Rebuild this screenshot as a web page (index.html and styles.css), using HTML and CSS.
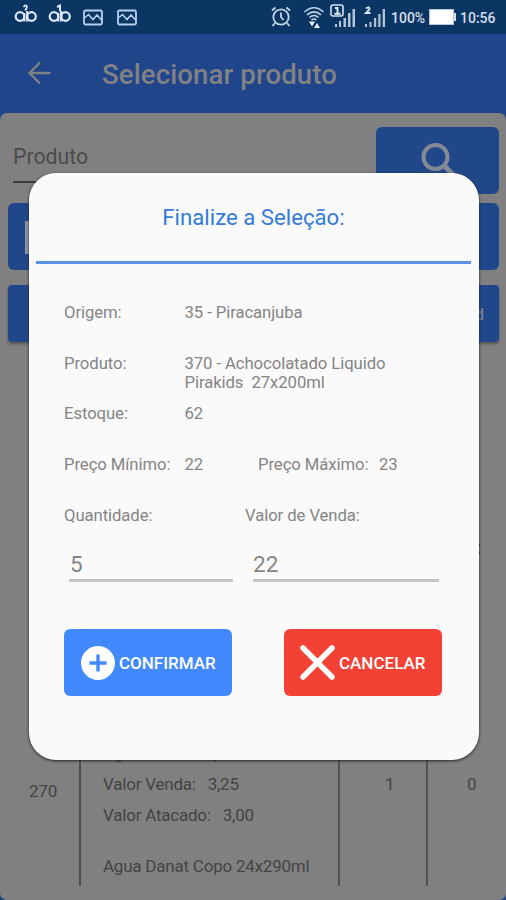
FILE: index.html
```html
<!DOCTYPE html>
<html lang="pt-BR">
<head>
<meta charset="utf-8">
<title>Selecionar produto</title>
<link rel="stylesheet" href="styles.css">
</head>
<body>
<div class="screen">
  <header class="status">
    <div class="status-left">
      <svg width="24" height="20" viewBox="0 0 24 20" fill="none" stroke="#dce9fa" stroke-width="2.200"><circle cx="6" cy="12.500" r="4.300"/><circle cx="17.500" cy="12.500" r="4.300"/><path d="M10.300 9v8.500M13.200 7v10.500"/><path d="M9.500 3q2.500-3 3.500-.500 0 1.500-2 4" stroke-width="1.800"/></svg>
      <svg width="24" height="20" viewBox="0 0 24 20" fill="none" stroke="#dce9fa" stroke-width="2.200"><circle cx="6" cy="12.500" r="4.300"/><circle cx="17.500" cy="12.500" r="4.300"/><path d="M10.300 9v8.500M13.200 7v10.500"/><path d="M9 3l3-1.500v6" stroke-width="2"/></svg>
      <svg class="pic" width="20" height="17" viewBox="0 0 20 17" fill="none" stroke="#b5cff0" stroke-width="1.800"><rect x="1" y="1.500" width="18" height="14" rx="1.500"/><path d="M2 8.500l3.500-3 4.500 5 4-4.500 4.500 5" stroke-width="1.600"/></svg>
      <svg class="pic" width="20" height="17" viewBox="0 0 20 17" fill="none" stroke="#b5cff0" stroke-width="1.800"><rect x="1" y="1.500" width="18" height="14" rx="1.500"/><path d="M2 8.500l3.500-3 4.500 5 4-4.500 4.500 5" stroke-width="1.600"/></svg>
    </div>
    <div class="status-right">
      <svg width="20" height="22" viewBox="0 0 20 22" fill="none" stroke="#c3d3e6" stroke-width="1.800"><circle cx="10" cy="11" r="7.700"/><path d="M10 6.500V11l2.500 3M1 4.500l3.500-3M19 4.500l-3.500-3M4 17l-2.500 3M16 17l2.500 3"/></svg>
      <svg class="wifi" width="22" height="24" viewBox="0 0 22 24" fill="none" stroke="#c3d3e6" stroke-width="1.600"><path d="M1.500 6q9.500-8.500 19 0M4 8.800q7-5.800 14 0M6.500 11.500q4.500-4 9 0M8.500 14q2.500-2 5 0"/><path d="M6 15.500h6l-3 5zM11 22h6l-3-5z" fill="#e8f0fa" stroke="none"/></svg>
      <svg class="sim" width="26" height="24" viewBox="0 0 26 24"><path d="M5 20h2v3H5zM9 17h2v6H9zM13.500 14h2.500v9h-2.500zM18 9h2.500v14H18zM22.500 5H25v18h-2.500z" fill="#b4c4d8"/><rect x="1" y="1" width="12" height="11" rx="2" fill="#0b3664" stroke="#d4e0ef" stroke-width="1.600"/><path d="M5 4h2.500v6M4.500 9.700h6" fill="none" stroke="#e4edf8" stroke-width="1.900"/></svg>
      <svg class="sim2" width="22" height="22" viewBox="0 0 22 22"><path d="M1 18h2v3H1zM5.500 16h2v5h-2zM10 12h2.200v9H10zM14.300 8h2.200v13h-2.200zM18.700 3H21v18h-2.300z" fill="#b4c4d8"/><path d="M2 2.500q3.500-2.500 3.500.8L2 7h4.500" fill="none" stroke="#dce7f4" stroke-width="1.800"/></svg>
      <span class="pct">100%</span>
      <span class="battery"></span>
      <span class="clock">10:56</span>
    </div>
  </header>
  <div class="appbar">
    <svg class="back" width="24" height="24" viewBox="0 0 24 24" fill="none" stroke="#808185" stroke-width="2.300"><path d="M23.500 12H3M13 1.500L2.500 12 13 22.500"/></svg>
    <h1>Selecionar produto</h1>
  </div>
  <main class="page">
    <div class="search">
      <div class="field">Produto</div>
      <div class="btn search-btn"><svg width="40" height="40" viewBox="0 0 40 40" fill="none" stroke="#848a95" stroke-width="4"><circle cx="16.500" cy="18" r="12"/><path d="M25 26.500l12 12" stroke-width="5"/></svg></div>
    </div>
    <div class="btn scan"><span class="scan-icon"></span></div>
    <div class="btn tabs">d</div>
    <div class="list">
      <div class="line-mark">:</div>
      <div class="item">
        <div class="code">270</div>
        <div class="desc">
          <p class="prev">Agua Danat Copo</p>
          <p class="d1">Valor Venda:&nbsp;&nbsp; 3,25</p>
          <p class="d2">Valor Atacado:&nbsp;&nbsp; 3,00</p>
          <p class="d3">Agua Danat Copo 24x290ml</p>
        </div>
        <div class="num">1</div>
        <div class="num last">0</div>
      </div>
    </div>
  </main>
  <section class="dialog">
    <h2><span>Finalize a Seleção:</span></h2>
    <div class="info">
      <div class="row"><span class="label">Origem:</span><span>35 - Piracanjuba</span></div>
      <div class="row"><span class="label">Produto:</span><span>370 - Achocolatado Liquido<br>Pirakids&nbsp; 27x200ml</span></div>
      <div class="row"><span class="label">Estoque:</span><span>62</span></div>
      <div class="row"><span class="label">Preço Mínimo:</span><span class="min">22</span><span class="max">Preço Máximo:</span><span>23</span></div>
      <div class="row"><span class="qty">Quantidade:</span><span>Valor de Venda:</span></div>
    </div>
    <div class="inputs"><div class="input first">5</div><div class="input">22</div></div>
    <div class="actions">
      <div class="action confirm"><svg width="34" height="34" viewBox="0 0 34 34"><circle cx="17" cy="17" r="17" fill="#fff"/><path d="M17 8.500v17M8.500 17h17" stroke="#4289fd" stroke-width="3.400"/></svg><span>CONFIRMAR</span></div>
      <div class="action cancel"><svg width="35" height="35" viewBox="0 0 35 35"><path d="M3 3l29 29M32 3L3 32" stroke="#fff" stroke-width="5.500" stroke-linecap="round"/></svg><span>CANCELAR</span></div>
    </div>
  </section>
</div>
</body>
</html>
```
FILE: styles.css
```css
* { box-sizing: border-box; }
body { margin: 0; font-family: Roboto, "Liberation Sans", sans-serif; }
h1, h2, p { margin: 0; }
svg { display: block; flex: none; }
.screen { position: relative; width: 506px; height: 900px; overflow: hidden; background: #21458a; display: flex; flex-direction: column; }
.status { height: 34px; flex: none; background: #0b3664; display: flex; justify-content: space-between; padding: 0 10px 0 14px; color: #d5deea; }
.status-left { display: flex; gap: 10px; padding-top: 4px; }
.status-left .pic { margin: 5px 4px 0 1px; }
.status-left .pic:last-child { margin-left: 0; }
.status-right { display: flex; align-items: flex-start; padding-top: 6px; font-size: 14px; line-height: 24px; font-weight: 500; }
.wifi { margin-left: 12px; }
.sim { margin: -2px 0 0 7px; }
.sim2 { margin: 0 0 0 8px; }
.status-right > svg:first-child { margin-right: -3px; }
.status-right .sim { margin-left: 5px; }
.status-right .wifi { margin-left: 15px; }
.pct { margin-left: 5px; width: 35px; white-space: nowrap; }
.battery { width: 25px; height: 16px; margin: 3px 0 0 3px; background: #fff; border: 1px solid #b9c6d6; position: relative; }
.battery::after { content: ""; position: absolute; right: -3px; top: 3px; width: 2px; height: 8px; background: #d5deea; }
.clock { margin-left: 6px; width: 36px; white-space: nowrap; }
.appbar { height: 79px; flex: none; display: flex; align-items: center; padding-left: 27px; }
.back { margin: -2px 51px 0 0; }
h1 { font-size: 27.600px; font-weight: 500; letter-spacing: 0.1px; color: #808185; line-height: 34px; padding-top: 3px; }
.page { flex: 1; background: #808080; border-radius: 7px; padding: 14px 7px 14px 8px; display: flex; flex-direction: column; overflow: hidden; }
.btn { background: #21478b; border-radius: 6px; flex: none; }
.search { display: flex; justify-content: space-between; height: 67px; flex: none; }
.field { width: 355px; height: 56px; margin-left: 5px; border-bottom: 2px solid #3c3c3c; font-size: 21.300px; color: #4b4b4b; line-height: 60px; }
.search-btn { width: 123px; padding: 12px 0 0 43px; }
.scan { height: 67px; margin-top: 9px; padding: 18px 17px; }
.scan-icon { display: block; width: 70px; height: 33px; background: #9096a1; }
.tabs { height: 57px; margin-top: 15px; border-radius: 4px; text-align: right; padding-right: 15px; line-height: 58px; font-size: 17px; color: #838995; box-shadow: 0 2px 3px #555; }
.list { flex: 1; display: flex; flex-direction: column; justify-content: space-between; }
.line-mark { text-align: right; padding: 194px 18px 0 0; font-size: 18px; line-height: 24px; font-weight: 700; color: #161616; }
.item { display: flex; height: 158px; color: #444; font-size: 17px; white-space: nowrap; }
.item > div { flex: none; }
.item > div + div { border-left: 2px solid #505050; }
.code { width: 71px; padding: 51px 0 0 21px; line-height: 24px; letter-spacing: -0.2px; }
.desc { width: 259px; padding-left: 22px; line-height: 24px; letter-spacing: -0.22px; }
.prev { padding-top: 13px; }
.d1, .d2 { padding-top: 7px; }
.d3 { padding-top: 27px; }
.num { width: 88px; padding: 44px 0 0 45px; line-height: 24px; }
.item .last { padding-left: 39px; width: 65px; }
.dialog { position: absolute; left: 29px; top: 173px; width: 450px; height: 587px; background: #fafafa; border-radius: 27px; box-shadow: 0 1px 3px #222; color: #858585; }
h2 { height: 91px; margin: 0 8px 0 7px; border-bottom: 3px solid #5b91e2; text-align: center; font-size: 22.200px; font-weight: 400; line-height: 89px; color: #347bdd; }
.info { padding: 39px 35px 0; font-size: 16.700px; letter-spacing: -0.08px; line-height: 19.500px; }
.row { display: flex; margin-bottom: 30.700px; height: 20px; white-space: nowrap; }
.row .label { width: 120.500px; }
.min { width: 73.500px; }
.max { width: 121px; }
.qty { width: 181px; }
.inputs { display: flex; gap: 20px; padding-left: 40px; margin-top: -9px; font-size: 22.500px; line-height: 34px; }
.input { width: 186px; height: 35px; border-bottom: 3px solid #c4c4c4; }
.input.first { width: 164px; padding-left: 1px; }
.actions { display: flex; gap: 52px; padding-left: 35px; margin-top: 47px; }
.action { width: 168px; height: 67px; border-radius: 6px; background: #4289fd; display: flex; align-items: center; padding-left: 17px; gap: 4px; color: #fff; font-size: 17px; font-weight: 500; }
.cancel { width: 158px; background: #f44135; padding-left: 16px; }
```
